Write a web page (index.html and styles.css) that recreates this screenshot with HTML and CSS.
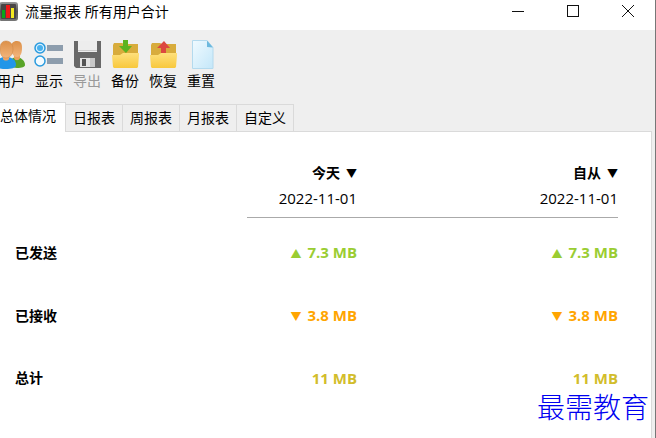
FILE: index.html
```html
<!DOCTYPE html>
<html lang="zh-CN">
  <head>
    <meta charset="UTF-8" />
    <meta name="viewport" content="width=device-width, initial-scale=1.0" />
    <title>流量报表 所有用户合计</title>
    <link rel="stylesheet" href="styles.css">
  </head>
  <body>
    <div class="window">
      <header class="titlebar">
        <svg class="app-icon" width="20" height="20" viewBox="0 0 20 20">
          <defs>
            <linearGradient id="frame" x1="0" y1="0" x2="0" y2="1">
              <stop offset="0" stop-color="#999" />
              <stop offset="0.5" stop-color="#555" />
              <stop offset="1" stop-color="#777" />
            </linearGradient>
          </defs>
          <rect x="0" y="1" width="19" height="19" rx="3" fill="url(#frame)" />
          <rect x="2" y="3" width="15" height="15" rx="1" fill="#4a4646" />
          <rect x="3" y="9" width="3" height="8" fill="#08a818" />
          <rect x="7" y="4" width="4" height="13" fill="#f01818" />
          <rect x="12" y="7" width="3" height="10" fill="#f4e820" />
        </svg>
        <h1>流量报表 所有用户合计</h1>
        <div class="window-controls">
          <button type="button" aria-label="最小化">
            <svg width="14" height="14" viewBox="0 0 14 14"><path d="M1 7.5h12" /></svg>
          </button>
          <button type="button" aria-label="最大化">
            <svg width="14" height="14" viewBox="0 0 14 14"><rect x="1.5" y="1.5" width="11" height="11" /></svg>
          </button>
          <button type="button" aria-label="关闭">
            <svg width="14" height="14" viewBox="0 0 14 14"><path d="M1 1l12 12M13 1L1 13" /></svg>
          </button>
        </div>
      </header>

      <nav class="toolbar">
        <button type="button">
          <svg width="30" height="30" viewBox="0 0 30 30">
            <defs>
              <linearGradient id="skin" x1="0" y1="0" x2="0" y2="1">
                <stop offset="0" stop-color="#dc9048" />
                <stop offset="1" stop-color="#f2b47c" />
              </linearGradient>
            </defs>
            <path d="M14 27V21c2-3 4-4 7-4 5 1 8 4 8 8 0 2-3 3-8 3z" fill="#58a428" />
            <path d="M18 14h6v4c-1 3-5 3-6 0z" fill="#eaa05c" />
            <path d="M15 8c0-5 2-7 6-7s5 3 5 7c0 6-2 9-5 9s-6-3-6-9z" fill="url(#skin)" />
            <path d="M0 25c0-5 4-8 10-8s10 3 10 8c0 3-5 4-10 4s-10-1-10-4z" fill="#2196e8" />
            <path d="M7 14h6v5c-1 2-5 2-6 0z" fill="#eda469" />
            <path d="M4 9c0-5 2-8 6-8s7 3 7 8-3 9-7 9-6-4-6-9z" fill="url(#skin)" stroke="#c98242" stroke-width="0.5" />
          </svg>
          <span>用户</span>
        </button>
        <button type="button">
          <svg width="30" height="30" viewBox="0 0 30 30">
            <circle cx="6" cy="8" r="5" fill="#d8f1ff" stroke="#289ade" stroke-width="1.5" />
            <circle cx="6" cy="8" r="3" fill="#48b0ed" />
            <circle cx="6" cy="21" r="5" fill="#f4fbff" stroke="#289ade" stroke-width="1.5" />
            <rect x="13" y="5" width="16" height="6" fill="#8d9dad" />
            <rect x="13" y="18" width="16" height="6" fill="#8d9dad" />
          </svg>
          <span>显示</span>
        </button>
        <button type="button" disabled>
          <svg width="30" height="30" viewBox="0 0 30 30">
            <path d="M2 1h27v27H4l-2-2z" fill="#686868" />
            <rect x="6" y="1" width="19" height="11" fill="#ededed" />
            <path d="M6 10.5h19" stroke="#ccc" />
            <rect x="8" y="18" width="15" height="9" fill="#e4e4e4" />
            <rect x="10" y="19" width="4" height="7" fill="#555" />
            <rect x="18" y="18" width="5" height="9" fill="#c8c8c8" />
          </svg>
          <span>导出</span>
        </button>
        <button type="button">
          <svg width="30" height="30" viewBox="0 0 30 30">
            <defs>
              <linearGradient id="folder" x1="0" y1="0" x2="0" y2="1">
                <stop offset="0" stop-color="#fee07c" />
                <stop offset="1" stop-color="#f8c83c" />
              </linearGradient>
            </defs>
            <path d="M3 5l1-2h8l2 1h14v13H3z" fill="#d8ac3c" />
            <path d="M2 15h8l3-2h16v2l-1 12-1 1H4l-1-1z" fill="url(#folder)" />
            <path d="M13 0h5v6h4l-6 7-7-7h4z" fill="#5db320" />
          </svg>
          <span>备份</span>
        </button>
        <button type="button">
          <svg width="30" height="30" viewBox="0 0 30 30">
            <path d="M3 5l1-2h8l2 1h14v13H3z" fill="#d8ac3c" />
            <path d="M13 14V8H9l7-7 6 7h-4v6z" fill="#dc4840" />
            <path d="M2 15h8l3-2h16v2l-1 12-1 1H4l-1-1z" fill="url(#folder)" />
          </svg>
          <span>恢复</span>
        </button>
        <button type="button">
          <svg width="30" height="30" viewBox="0 0 30 30">
            <defs>
              <linearGradient id="page" x1="0" y1="0" x2="1" y2="1">
                <stop offset="0" stop-color="#f0faff" />
                <stop offset="1" stop-color="#c4e7f9" />
              </linearGradient>
            </defs>
            <path d="M6.5 0.5H21l6 7v21H6.5z" fill="url(#page)" stroke="#b4daee" />
            <path d="M21 0.5V7l6 .5z" fill="#6db9de" />
          </svg>
          <span>重置</span>
        </button>
      </nav>

      <div class="tabs" role="tablist">
        <button type="button" role="tab" aria-selected="true" class="active">总体情况</button>
        <button type="button" role="tab" aria-selected="false">日报表</button>
        <button type="button" role="tab" aria-selected="false">周报表</button>
        <button type="button" role="tab" aria-selected="false">月报表</button>
        <button type="button" role="tab" aria-selected="false">自定义</button>
      </div>

      <main class="panel">
        <table class="summary">
          <colgroup>
            <col class="col-label" />
            <col class="col-today" />
            <col />
          </colgroup>
          <thead>
            <tr>
              <td></td>
              <th scope="col"><button type="button">今天<span class="arrow">▼</span></button></th>
              <th scope="col"><button type="button">自从<span class="arrow">▼</span></button></th>
            </tr>
            <tr class="dates">
              <td></td>
              <td>2022-11-01</td>
              <td>2022-11-01</td>
            </tr>
          </thead>
          <tbody>
            <tr class="sent">
              <th scope="row">已发送</th>
              <td><span class="arrow">▲</span>7.3 MB</td>
              <td><span class="arrow">▲</span>7.3 MB</td>
            </tr>
            <tr class="received">
              <th scope="row">已接收</th>
              <td><span class="arrow">▼</span>3.8 MB</td>
              <td><span class="arrow">▼</span>3.8 MB</td>
            </tr>
            <tr class="total">
              <th scope="row">总计</th>
              <td>11 MB</td>
              <td>11 MB</td>
            </tr>
          </tbody>
        </table>
      </main>
      <div class="watermark">最需教育</div>
    </div>
  </body>
</html>
```
FILE: styles.css
```css
* {
  box-sizing: border-box;
}
body {
  margin: 0;
  font-family: "Open Sans", "Noto Sans CJK SC", sans-serif;
  font-size: 14px;
  line-height: 20px;
  color: #000;
  overflow: hidden;
}
button {
  font: inherit;
  color: inherit;
  background: none;
  border: none;
  padding: 0;
  white-space: nowrap;
}
svg {
  display: block;
}

.window {
  position: relative;
  display: flex;
  flex-direction: column;
  min-height: 100vh;
  background: #efefef;
  border-right: 1px solid #777;
}

/* title bar */
.titlebar {
  display: flex;
  align-items: center;
  height: 30px;
  background: #fff;
}
.app-icon {
  margin: 0 6px 8px -1px;
}
.titlebar h1 {
  margin: 0 0 6px;
  font-size: 14px;
  font-weight: normal;
}
.window-controls {
  display: flex;
  margin-left: auto;
  height: 100%;
}
.window-controls button {
  display: flex;
  justify-content: center;
  width: 55px;
  padding-top: 4px;
}
.window-controls svg {
  fill: none;
  stroke: #111;
}

/* toolbar, runs slightly past the left edge */
.toolbar {
  display: flex;
  margin-left: -8px;
  padding: 10px 0 11px;
}
.toolbar button {
  display: flex;
  flex-direction: column;
  align-items: center;
  gap: 1px;
  width: 38px;
}
.toolbar button:disabled span {
  color: #999;
}

/* tabs */
.tabs {
  display: flex;
  align-items: flex-end;
  height: 29px;
}
.tabs button {
  height: 27px;
  padding: 0 7px;
  border: 1px solid #dadada;
  border-width: 1px 1px 0 0;
}
.tabs .active {
  height: 30px;
  margin-bottom: -1px;
  padding: 0 9px 3px 0;
  background: #fff;
  z-index: 1;
}

.panel {
  flex: 1;
  margin-right: 3px;
  padding: 29px 33px 0 15px;
  background: #fff;
  border: 1px solid #dadada;
  border-width: 1px 1px 0 0;
}

.summary {
  width: 100%;
  table-layout: fixed;
  border-collapse: collapse;
  font-size: 15px;
}
.col-label {
  width: 232px;
}
.col-today {
  width: 110px;
}
.summary th,
.summary td {
  height: 24px;
  padding: 0;
  text-align: right;
}
.summary th {
  font-size: 14px;
}
.summary .dates td {
  height: 32px;
  padding-bottom: 6px;
}
.summary .dates td + td {
  border-bottom: 1px solid #aaa;
}
.summary tbody th,
.summary tbody td {
  height: 62px;
  font-weight: bold;
}
.summary tbody tr:first-child > * {
  height: 68px;
  padding-top: 4px;
}
.summary tbody th {
  text-align: left;
}
.arrow {
  margin-right: 6px;
  font-size: 11px;
}
th .arrow {
  margin: 0 0 0 6px;
}
.sent td {
  color: #9acd32;
}
.received td {
  color: #ffa500;
}
.total td {
  color: #d2bd2b;
}

.watermark {
  position: absolute;
  right: 6px;
  bottom: 18px;
  font-family: "Noto Sans CJK SC", sans-serif;
  font-size: 28px;
  font-weight: 300;
  line-height: 28px;
  color: #0000f0;
}
```
